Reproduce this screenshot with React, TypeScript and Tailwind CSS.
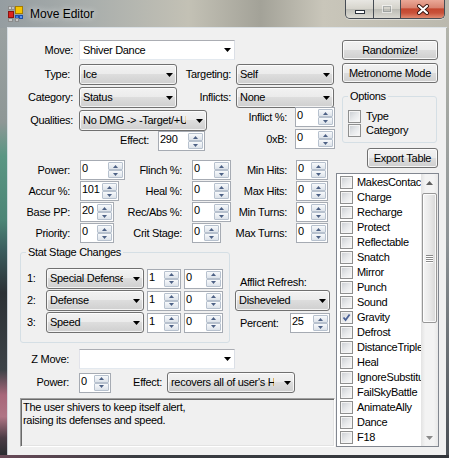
import clsx from "clsx";
import type { ReactNode } from "react";

const FLAGS = [
  "MakesContact",
  "Charge",
  "Recharge",
  "Protect",
  "Reflectable",
  "Snatch",
  "Mirror",
  "Punch",
  "Sound",
  "Gravity",
  "Defrost",
  "DistanceTriple",
  "Heal",
  "IgnoreSubstitute",
  "FailSkyBattle",
  "AnimateAlly",
  "Dance",
  "F18",
];

function Tri({ className = "fill-black", up }: { className?: string; up?: boolean }) {
  return (
    <svg width="7" height="4" viewBox="0 0 7 4" className={clsx(className, up && "rotate-180")}>
      <path d="M0 0h7L3.5 4z" />
    </svg>
  );
}

function Label({ className, children }: { className?: string; children: ReactNode }) {
  return (
    <span className={clsx("shrink-0 whitespace-nowrap text-right leading-[13px]", className)}>
      {children}
    </span>
  );
}

function Combo({ value, className, editable }: { value?: string; className: string; editable?: boolean }) {
  return (
    <div
      className={clsx(
        "flex shrink-0 items-center",
        editable
          ? "border border-[#abadb3] border-b-[#e3e9ef] border-l-[#e2e3ea] border-r-[#dbdfe6] bg-white"
          : "rounded-[3px] border border-[#707070] bg-[linear-gradient(180deg,#f2f2f2_0%,#ebebeb_49%,#dddddd_50%,#cfcfcf_100%)] shadow-[inset_0_0_0_1px_rgba(255,255,255,0.75)]",
        className,
      )}
    >
      <span className="ml-[3px] mr-[7px] min-w-0 flex-1 overflow-hidden whitespace-nowrap leading-[13px]">
        {value}
      </span>
      <span className="flex w-[13px] shrink-0 justify-center">
        <Tri />
      </span>
    </div>
  );
}

function SpinBtn({ up }: { up?: boolean }) {
  return (
    <div className="flex flex-1 items-center justify-center rounded-[1px] border border-[#b7c1ce] bg-[linear-gradient(180deg,#f7f9fb,#dde3ea)]">
      <svg width="5" height="3" viewBox="0 0 5 3" className={clsx("fill-[#4d6185]", up && "rotate-180")}>
        <path d="M0 0h5L2.5 3z" />
      </svg>
    </div>
  );
}

function Spin({ value, className }: { value: string; className: string }) {
  return (
    <div className={clsx("flex h-[20px] shrink-0 border border-[#a6abb3] bg-white", className)}>
      <span className="min-w-0 flex-1 overflow-hidden pl-[1px] pt-[1px] leading-[13px]">{value}</span>
      <div className="flex w-[16px] shrink-0 flex-col py-px pr-px">
        <SpinBtn up />
        <SpinBtn />
      </div>
    </div>
  );
}

function Btn({ children, className }: { children: ReactNode; className: string }) {
  return (
    <button
      type="button"
      className={clsx(
        "flex shrink-0 items-center justify-center rounded-[3px] border border-[#707070] bg-[linear-gradient(180deg,#f2f2f2_0%,#ebebeb_49%,#dddddd_50%,#cfcfcf_100%)] leading-[13px] shadow-[inset_0_0_0_1px_rgba(255,255,255,0.8)]",
        className,
      )}
    >
      {children}
    </button>
  );
}

function Box({ checked }: { checked?: boolean }) {
  return (
    <span className="flex h-[13px] w-[13px] shrink-0 items-center justify-center border border-[#8e8f8f] bg-[linear-gradient(135deg,#c8ccd1_0%,#e6e8ea_50%,#fbfbfb_100%)] shadow-[inset_0_0_0_1px_#f4f4f4]">
      {checked && (
        <svg width="9" height="9" viewBox="0 0 9 9">
          <path d="M1.5 4.5L3.6 7L7.6 1.5" fill="none" stroke="#4a6196" strokeWidth="1.8" />
        </svg>
      )}
    </span>
  );
}

function Cell({ width, labelW, label, value, gap, spinW }: {
  width: string; labelW: string; label: string; value: string; gap: string; spinW: string;
}) {
  return (
    <div className={clsx("flex shrink-0 items-center", width)}>
      <Label className={labelW}>{label}</Label>
      <Spin value={value} className={clsx(gap, spinW)} />
    </div>
  );
}

function AppIcon() {
  return (
    <svg width="16" height="16" viewBox="0 0 16 16">
      <rect x="0.5" y="0.5" width="3" height="3" fill="#d0d0d0" stroke="#8c8c8c" />
      <rect x="3.5" y="0.5" width="3" height="3" fill="#bcbcbc" stroke="#8c8c8c" />
      <rect x="7.5" y="0.5" width="7" height="7" fill="#f6c400" stroke="#a47c00" />
      <rect x="0.5" y="5.5" width="5" height="6" fill="#dd2520" stroke="#8b1210" />
      <rect x="0.5" y="12.5" width="4" height="3" fill="#c6c6c6" stroke="#8c8c8c" />
      <rect x="7.5" y="9.5" width="3" height="3" fill="#3d7be0" stroke="#1d4ea8" />
      <rect x="11.5" y="9.5" width="3" height="3" fill="#5b94ee" stroke="#1d4ea8" />
      <rect x="7.5" y="12.5" width="3" height="3" fill="#c6c6c6" stroke="#8c8c8c" />
    </svg>
  );
}

function TitleBar() {
  return (
    <div className="flex h-[28px] shrink-0 items-start bg-[linear-gradient(90deg,#959da1_0%,#a9aeac_20%,#c3c1b5_42%,#a3a298_58%,#c9c6ba_72%,#bbb9ae_100%)]">
      <div className="ml-[8px] mt-[6px]">
        <AppIcon />
      </div>
      <span className="ml-[6px] mt-[6px] text-[12px] leading-[16px] tracking-normal [text-shadow:0_0_6px_rgba(255,255,255,0.9)]">
        Move Editor
      </span>
      <div className="ml-auto mr-[4px] flex h-[19px] overflow-hidden rounded-b-[5px] border border-t-0 border-[#464c54] shadow-[0_1px_0_rgba(255,255,255,0.45)]">
        <div className="flex w-[27px] items-end justify-center bg-[linear-gradient(180deg,rgba(255,255,255,0.6)_0%,rgba(255,255,255,0.3)_48%,rgba(170,178,186,0.25)_52%,rgba(255,255,255,0.4)_100%)] pb-[4px]">
          <span className="h-[4px] w-[10px] border border-[#2c323c] bg-white" />
        </div>
        <div className="w-px bg-[#464c54]" />
        <div className="flex w-[26px] items-center justify-center bg-[linear-gradient(180deg,rgba(255,255,255,0.6)_0%,rgba(255,255,255,0.3)_48%,rgba(170,178,186,0.25)_52%,rgba(255,255,255,0.4)_100%)]">
          <span className="h-[8px] w-[10px] border border-[rgba(255,255,255,0.55)] shadow-[inset_0_0_0_1px_rgba(90,100,110,0.35)]" />
        </div>
        <div className="w-px bg-[#464c54]" />
        <div className="flex w-[43px] items-center justify-center bg-[linear-gradient(180deg,#eaa897_0%,#d98572_42%,#c4472f_50%,#c8523a_72%,#e08a70_100%)]">
          <svg width="14" height="11" viewBox="0 0 14 11">
            <path d="M3 2L11 9M11 2L3 9" stroke="#3b1711" strokeWidth="4" strokeLinecap="round" />
            <path d="M3 2L11 9M11 2L3 9" stroke="#fff" strokeWidth="2.2" strokeLinecap="round" />
          </svg>
        </div>
      </div>
    </div>
  );
}

function FlagList() {
  return (
    <div className="mt-[5px] flex h-[274px] w-[103px] border border-[#828790] bg-white">
      <div className="w-[84px] shrink-0 overflow-hidden pt-px">
        {FLAGS.map((f) => (
          <div key={f} className="flex h-[15px] items-center pl-[3px]">
            <Box checked={f === "Gravity"} />
            <span className="ml-[4px] whitespace-nowrap leading-[13px]">{f}</span>
          </div>
        ))}
      </div>
      <div className="flex w-[17px] shrink-0 flex-col bg-[linear-gradient(90deg,#e3e3e3_0%,#f3f3f3_25%,#f3f3f3_75%,#e8e8e8_100%)]">
        <div className="flex h-[17px] items-center justify-center">
          <Tri up className="fill-[#5f5f5f]" />
        </div>
        <div className="flex-1 px-px pt-[2px]">
          <div className="flex h-[130px] flex-col items-center justify-center gap-[1px] rounded-[2px] border border-[#979797] bg-[linear-gradient(90deg,#f5f5f5,#e9e9e9_50%,#d8d8d8)] shadow-[inset_0_0_0_1px_rgba(255,255,255,0.8)]">
            <span className="h-px w-[7px] bg-[#8a8a8a] shadow-[0_1px_0_#fff]" />
            <span className="h-px w-[7px] bg-[#8a8a8a] shadow-[0_1px_0_#fff]" />
            <span className="h-px w-[7px] bg-[#8a8a8a] shadow-[0_1px_0_#fff]" />
            <span className="h-px w-[7px] bg-[#8a8a8a] shadow-[0_1px_0_#fff]" />
          </div>
        </div>
        <div className="flex h-[17px] items-center justify-center">
          <Tri className="fill-[#8a8a8a]" />
        </div>
      </div>
    </div>
  );
}

function LeftColumn() {
  return (
    <div className="flex w-[328px] shrink-0 flex-col">
      <div className="mt-[12px] flex h-[20px] items-center">
        <Label className="w-[65px]">Move:</Label>
        <Combo editable value="Shiver Dance" className="ml-[6px] h-[20px] w-[156px]" />
      </div>
      <div className="mt-[4px] flex h-[21px] items-center">
        <Label className="w-[62px]">Type:</Label>
        <Combo value="Ice" className="ml-[9px] h-[21px] w-[98px]" />
        <Label className="w-[54px]">Targeting:</Label>
        <Combo value="Self" className="ml-[5px] h-[21px] w-[98px]" />
      </div>
      <div className="mt-[2px] flex h-[21px] items-center">
        <Label className="w-[65px]">Category:</Label>
        <Combo value="Status" className="ml-[6px] h-[21px] w-[98px]" />
        <Label className="w-[54px]">Inflicts:</Label>
        <Combo value="None" className="ml-[5px] h-[21px] w-[98px]" />
      </div>
      <div className="-mt-[1px] flex h-[22px] items-start">
        <Label className="mt-[7px] w-[65px]">Qualities:</Label>
        <Combo value="No DMG -> -Target/+User" className="ml-[6px] mt-[3px] h-[21px] w-[128px]" />
        <Label className="mt-[4px] w-[80px]">Inflict %:</Label>
        <Spin value="0" className="ml-[8px] w-[40px]" />
      </div>
      <div className="flex h-[21px] items-start">
        <Label className="mt-[5px] w-[141px]">Effect:</Label>
        <Spin value="290" className="ml-[9px] mt-[2px] w-[47px]" />
        <Label className="mt-[4px] w-[82px]">0xB:</Label>
        <Spin value="0" className="ml-[8px] w-[40px]" />
      </div>

      <div className="mt-[10px] flex h-[20px] items-center">
        <Cell width="w-[117px]" labelW="w-[62px]" label="Power:" value="0" gap="ml-[10px]" spinW="w-[45px]" />
        <Cell width="w-[106px]" labelW="w-[57px]" label="Flinch %:" value="0" gap="ml-[10px]" spinW="w-[39px]" />
        <Cell width="w-[97px]" labelW="w-[56px]" label="Min Hits:" value="0" gap="ml-[9px]" spinW="w-[32px]" />
      </div>
      <div className="mt-[1px] flex h-[20px] items-center">
        <Cell width="w-[117px]" labelW="w-[62px]" label="Accur %:" value="101" gap="ml-[10px]" spinW="w-[39px]" />
        <Cell width="w-[106px]" labelW="w-[57px]" label="Heal %:" value="0" gap="ml-[10px]" spinW="w-[39px]" />
        <Cell width="w-[97px]" labelW="w-[56px]" label="Max Hits:" value="0" gap="ml-[9px]" spinW="w-[32px]" />
      </div>
      <div className="mt-[1px] flex h-[20px] items-center">
        <Cell width="w-[117px]" labelW="w-[62px]" label="Base PP:" value="20" gap="ml-[10px]" spinW="w-[34px]" />
        <Cell width="w-[106px]" labelW="w-[57px]" label="Rec/Abs %:" value="0" gap="ml-[10px]" spinW="w-[39px]" />
        <Cell width="w-[97px]" labelW="w-[56px]" label="Min Turns:" value="0" gap="ml-[9px]" spinW="w-[32px]" />
      </div>
      <div className="mt-[1px] flex h-[20px] items-center">
        <Cell width="w-[117px]" labelW="w-[62px]" label="Priority:" value="0" gap="ml-[10px]" spinW="w-[34px]" />
        <Cell width="w-[106px]" labelW="w-[57px]" label="Crit Stage:" value="0" gap="ml-[10px]" spinW="w-[29px]" />
        <Cell width="w-[97px]" labelW="w-[56px]" label="Max Turns:" value="0" gap="ml-[9px]" spinW="w-[32px]" />
      </div>

      <div className="mt-[3px] flex items-start">
        <fieldset className="ml-[12px] w-[210px] rounded-[3px] border border-[#d5dfe5] pb-[9px]">
          <legend className="ml-[5px] px-[2px] leading-[13px]">Stat Stage Changes</legend>
          <div className="mt-[9px] flex flex-col gap-[1px]">
            {[
              ["1:", "Special Defense"],
              ["2:", "Defense"],
              ["3:", "Speed"],
            ].map(([n, stat]) => (
              <div key={n} className="flex h-[21px] items-center pl-[6px]">
                <span className="w-[19px] shrink-0 leading-[13px]">{n}</span>
                <Combo value={stat} className="h-[21px] w-[98px]" />
                <Spin value="1" className="ml-[3px] w-[34px]" />
                <Spin value="0" className="ml-[3px] w-[39px]" />
              </div>
            ))}
          </div>
        </fieldset>
        <div className="ml-[5px] flex w-[95px] shrink-0 flex-col">
          <span className="mt-[30px] pl-[5px] leading-[13px]">Afflict Refresh:</span>
          <Combo value="Disheveled" className="mt-[1px] h-[21px] w-[95px]" />
          <div className="mt-[2px] flex h-[20px] items-center">
            <span className="w-[55px] shrink-0 pl-[5px] leading-[13px]">Percent:</span>
            <Spin value="25" className="w-[40px]" />
          </div>
        </div>
      </div>

      <div className="mt-[6px] flex h-[20px] items-center">
        <Label className="w-[61px]">Z Move:</Label>
        <Combo editable className="ml-[10px] h-[20px] w-[156px]" />
      </div>
      <div className="mt-[3px] flex h-[21px] items-center">
        <Label className="w-[61px]">Power:</Label>
        <Spin value="0" className="ml-[10px] w-[32px]" />
        <Label className="w-[51px]">Effect:</Label>
        <Combo value="recovers all of user's HP" className="ml-[5px] h-[21px] w-[128px]" />
      </div>
      <div className="ml-[12px] mt-[5px] h-[49px] w-[315px] border border-[#a0a0a0] border-b-white border-r-white px-[2px] pt-[2px] leading-[13px] shadow-[inset_1px_1px_0_#696969,inset_-1px_-1px_0_#e3e3e3]">
        The user shivers to keep itself alert,
        <br />
        raising its defenses and speed.
      </div>
    </div>
  );
}

function RightColumn() {
  return (
    <div className="flex w-[103px] shrink-0 flex-col">
      <Btn className="ml-[6px] mt-[12px] h-[20px] w-[96px]">Randomize!</Btn>
      <Btn className="ml-[6px] mt-[3px] h-[20px] w-[96px]">Metronome Mode</Btn>
      <fieldset className="ml-[6px] mt-[7px] w-[95px] rounded-[3px] border border-[#d5dfe5] pb-[5px]">
        <legend className="ml-[5px] px-[2px] leading-[13px]">Options</legend>
        <div className="mt-[7px] flex flex-col gap-[1px] pl-[5px]">
          <div className="flex h-[13px] items-center gap-[5px]">
            <Box />
            <span className="leading-[13px]">Type</span>
          </div>
          <div className="flex h-[13px] items-center gap-[5px]">
            <Box />
            <span className="leading-[13px]">Category</span>
          </div>
        </div>
      </fieldset>
      <Btn className="ml-[31px] mt-[5px] h-[20px] w-[71px]">Export Table</Btn>
      <FlagList />
    </div>
  );
}

export default function App() {
  return (
    <div className="flex h-[458px] w-[449px] flex-col overflow-hidden bg-[#3a3d42] font-['Liberation_Sans',Arial,sans-serif] text-[11px] tracking-[-0.3px] text-black">
      <TitleBar />
      <div className="flex h-[427px] shrink-0">
        <div className="w-[8px] shrink-0 bg-[linear-gradient(180deg,#9aa1a1_0%,#8e9796_22%,#5a9683_30%,#4c8576_45%,#3b5d5e_52%,#2c3135_62%,#3c4247_80%,#a8677a_86%,#b07585_91%,#4b3c45_96%,#2b2d31_100%)]" />
        <div className="flex w-[438px] shrink-0 bg-[#f0f0f0] shadow-[0_0_0_1px_rgba(225,232,238,0.85)]">
          <LeftColumn />
          <RightColumn />
        </div>
        <div className="flex-1 bg-[linear-gradient(180deg,#b3b4ab_0%,#8d9396_50%,#4a4f55_100%)]" />
      </div>
      <div className="flex-1 bg-[linear-gradient(90deg,#6a4a58,#3a3d42_30%,#33363b)]" />
    </div>
  );
}
